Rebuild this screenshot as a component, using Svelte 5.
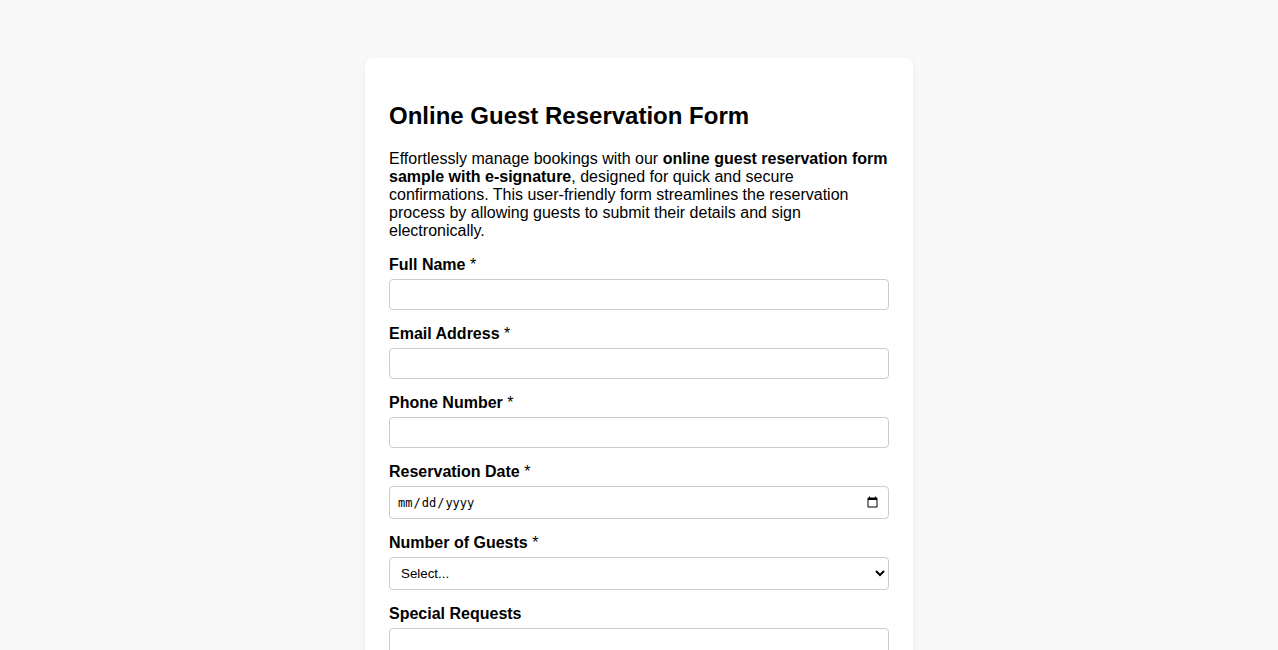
<script>
  const textFields = [
    { id: 'fullname', label: 'Full Name', type: 'text' },
    { id: 'email', label: 'Email Address', type: 'email' },
    { id: 'phone', label: 'Phone Number', type: 'tel' },
    { id: 'date', label: 'Reservation Date', type: 'date' }
  ];
</script>

<main>
  <form>
    <h2>Online Guest Reservation Form</h2>
    <p>
      Effortlessly manage bookings with our
      <strong>online guest reservation form sample with e-signature</strong>, designed for quick and
      secure confirmations. This user-friendly form streamlines the reservation process by allowing
      guests to submit their details and sign electronically.
    </p>
    {#each textFields as field (field.id)}
      <label for={field.id}>{field.label} <span>*</span></label>
      <input id={field.id} type={field.type} required />
    {/each}
    <label for="guests">Number of Guests <span>*</span></label>
    <select id="guests" required>
      <option value="">Select...</option>
      <option>1</option>
      <option>2</option>
      <option>3</option>
      <option>4</option>
      <option>5+</option>
    </select>
    <label for="requests">Special Requests</label>
    <textarea id="requests" rows="3"></textarea>
  </form>
</main>

<style>
  :global(body) {
    background: #f9f9f9;
    font-family: Arial, 'Liberation Sans', sans-serif;
  }
  main {
    padding: 58px 24px 40px;
  }
  form {
    box-sizing: border-box;
    max-width: 548px;
    margin: 0 auto;
    padding: 24px;
    background: #fff;
    border-radius: 8px;
    box-shadow: 0 2px 8px rgba(0, 0, 0, 0.06);
  }
  h2 {
    margin: 20px 0;
    font-size: 24px;
    line-height: 28px;
  }
  p {
    margin: 0 0 16px;
    font-size: 16px;
    line-height: 18px;
  }
  label {
    display: block;
    margin-bottom: 5px;
    font-size: 16px;
    line-height: 18px;
    font-weight: bold;
  }
  span {
    font-weight: normal;
  }
  input,
  select,
  textarea {
    display: block;
    box-sizing: border-box;
    width: 100%;
    margin: 0 0 15px;
    padding: 7px;
    border: 1px solid #ccc;
    border-radius: 4px;
    background: #fff;
    color: #000;
  }
  input[type='date'] {
    min-height: 33px;
    font-family: 'DejaVu Sans Mono', monospace;
    font-size: 12px;
  }
  input[type='date']::-webkit-calendar-picker-indicator {
    width: 13px;
    height: 13px;
  }
</style>
